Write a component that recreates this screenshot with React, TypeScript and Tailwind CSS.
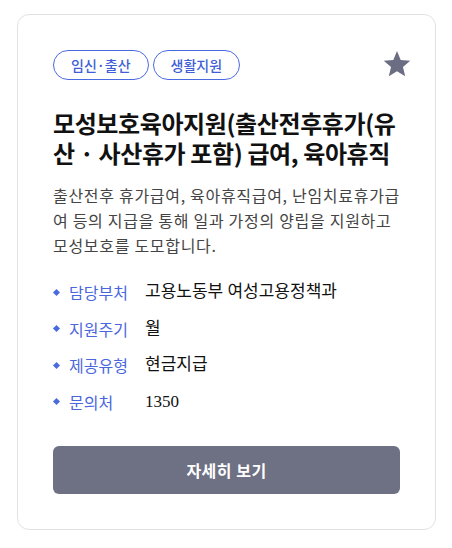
const KR = { fontFamily: '"Noto Sans CJK KR", "Noto Sans", sans-serif' };
const VALUE = { fontFamily: '"Liberation Serif", "Noto Sans CJK KR", serif' };

const INFO = [
  { label: "담당부처", value: "고용노동부 여성고용정책과" },
  { label: "지원주기", value: "월" },
  { label: "제공유형", value: "현금지급" },
  { label: "문의처", value: "1350" },
];

function Tag({ children }: { children: string }) {
  return (
    <span className="flex h-[30px] items-center rounded-full border border-[#4a6ae0] px-[17px] text-[14px] font-medium text-[#3f5fd6]">
      {children}
    </span>
  );
}

function StarIcon() {
  return (
    <svg width="30" height="30" viewBox="0 0 24 24" className="-mr-3 -mt-px">
      <path
        fill="#6b6d82"
        d="M12 1.6l2.95 7.1 7.65.62-5.83 5 1.78 7.48L12 17.8l-6.55 4 1.78-7.48-5.83-5 7.65-.62z"
      />
    </svg>
  );
}

export default function App() {
  return (
    <div className="min-h-[548px] bg-white pt-[14px]" style={KR}>
      <div className="ml-[17px] w-[419px] rounded-[12px] border border-[#e2e2e2] bg-white px-[35px] pb-[35px] pt-[35px]">
        <div className="flex items-start justify-between">
          <div className="flex gap-[4px]">
            <Tag>임신·출산</Tag>
            <Tag>생활지원</Tag>
          </div>
          <StarIcon />
        </div>

        <h2 className="mt-[28px] text-[24px] font-bold leading-[30px] tracking-[-0.4px] text-[#111]">
          모성보호육아지원(출산전후휴가(유산 · 사산휴가 포함) 급여, 육아휴직
        </h2>

        <p className="mt-[15px] text-[16px] leading-[25px] tracking-[0.7px] text-[#444]">
          출산전후 휴가급여, 육아휴직급여, 난임치료휴가급여 등의 지급을 통해 일과 가정의 양립을 지원하고 모성보호를 도모합니다.
        </p>

        <ul className="mt-[22px] flex flex-col gap-[12.5px]">
          {INFO.map((item) => (
            <li key={item.label} className="flex items-center text-[16px] leading-[24px]">
              <span className="ml-[1px] mr-[10px] h-[5px] w-[5px] rotate-45 bg-[#4a6ae0]" />
              <span className="w-[76px] text-[#4a66dd]">{item.label}</span>
              <span className="text-[17px] text-[#111]" style={VALUE}>
                {item.value}
              </span>
            </li>
          ))}
        </ul>

        <button className="mt-[32px] flex h-[48px] w-full items-center justify-center rounded-[6px] bg-[#6e7084] text-[16px] font-bold tracking-[0.5px] text-white">
          자세히 보기
        </button>
      </div>
    </div>
  );
}
